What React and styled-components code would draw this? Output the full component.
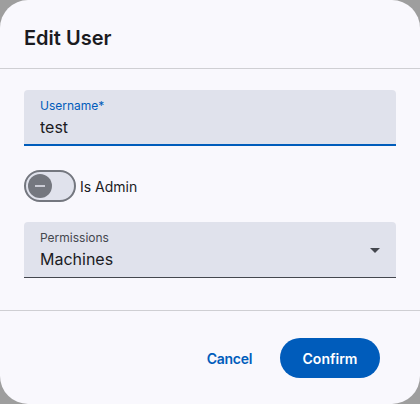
import React, { useState } from "react";
import styled, { createGlobalStyle } from "styled-components";

const GlobalStyle = createGlobalStyle`
  html, body {
    margin: 0;
    padding: 0;
    background: #9e9e9e;
  }
  body {
    font-family: "Inter", "Noto Sans", sans-serif;
  }
`;

const EditUserDialog = () => {
  const [username, setUsername] = useState("test");
  const [isAdmin, setIsAdmin] = useState(false);

  return (
    <Dialog>
      <Header>
        <Title>Edit User</Title>
      </Header>
      <Body>
        <FilledField focused>
          <FieldLabel focused>Username*</FieldLabel>
          <FieldInput
            value={username}
            onChange={(e) => setUsername(e.target.value)}
          />
        </FilledField>

        <SwitchRow>
          <Track on={isAdmin} onClick={() => setIsAdmin(!isAdmin)}>
            <Thumb>
              <svg width="12" height="12" viewBox="0 0 12 12">
                <rect x="1" y="5.2" width="10" height="1.6" fill="#e0e2ec" />
              </svg>
            </Thumb>
          </Track>
          <SwitchLabel>Is Admin</SwitchLabel>
        </SwitchRow>

        <FilledField>
          <FieldLabel>Permissions</FieldLabel>
          <SelectValue>Machines</SelectValue>
          <Arrow>
            <svg width="10" height="5" viewBox="0 0 10 5">
              <path d="M0 0 L10 0 L5 5 Z" fill="#44474e" />
            </svg>
          </Arrow>
        </FilledField>
      </Body>
      <Footer>
        <TextButton>Cancel</TextButton>
        <PrimaryButton>Confirm</PrimaryButton>
      </Footer>
    </Dialog>
  );
};

export default function App() {
  return (
    <>
      <GlobalStyle />
      <EditUserDialog />
    </>
  );
}

const Dialog = styled.div`
  width: 420px;
  height: 404px;
  box-sizing: border-box;
  background: #f9f8fd;
  border-radius: 28px;
  display: flex;
  flex-direction: column;
  overflow: hidden;
`;

const Header = styled.div`
  padding: 24px 24px 16px;
  border-bottom: 1px solid #cfcfd3;
`;

const Title = styled.h2`
  margin: 0;
  font-size: 20px;
  line-height: 28px;
  font-weight: 600;
  color: #1b1b1f;
`;

const Body = styled.div`
  padding: 21px 24px 32px;
  display: flex;
  flex-direction: column;
  border-bottom: 1px solid #cfcfd3;
`;

const FilledField = styled.div`
  position: relative;
  height: 56px;
  box-sizing: border-box;
  background: #e0e2ec;
  border-radius: 4px 4px 0 0;
  border-bottom: ${(p) => (p.focused ? "2px solid #005cbb" : "1px solid #44474e")};
  padding: 8px 16px 0;
  display: flex;
  flex-direction: column;
`;

const FieldLabel = styled.span`
  font-size: 12px;
  line-height: 16px;
  color: ${(p) => (p.focused ? "#005cbb" : "#44474e")};
`;

const FieldInput = styled.input`
  border: none;
  outline: none;
  background: transparent;
  padding: 0;
  margin-top: 1px;
  font-family: inherit;
  font-size: 16px;
  line-height: 24px;
  color: #1b1b1f;
`;

const SelectValue = styled.span`
  margin-top: 1px;
  font-size: 16px;
  line-height: 24px;
  color: #1b1b1f;
`;

const Arrow = styled.span`
  position: absolute;
  right: 16px;
  top: 26px;
  display: flex;
`;

const SwitchRow = styled.div`
  display: flex;
  align-items: center;
  gap: 4px;
  margin: 24px 0 20px;
`;

const Track = styled.button`
  width: 52px;
  height: 32px;
  box-sizing: border-box;
  padding: 0 0 0 2px;
  border: 2px solid #74777f;
  border-radius: 16px;
  background: #e0e2ec;
  display: flex;
  align-items: center;
  cursor: pointer;
`;

const Thumb = styled.span`
  width: 24px;
  height: 24px;
  border-radius: 50%;
  background: #74777f;
  display: flex;
  align-items: center;
  justify-content: center;
`;

const SwitchLabel = styled.span`
  font-size: 14px;
  color: #1b1b1f;
`;

const Footer = styled.div`
  display: flex;
  justify-content: flex-end;
  align-items: center;
  gap: 16px;
  padding: 27px 40px 0 24px;
`;

const TextButton = styled.button`
  height: 40px;
  padding: 0 12px;
  border: none;
  border-radius: 20px;
  background: transparent;
  color: #005cbb;
  font-family: inherit;
  font-size: 14px;
  font-weight: 600;
  letter-spacing: -0.3px;
  cursor: pointer;
`;

const PrimaryButton = styled.button`
  height: 40px;
  width: 100px;
  border: none;
  border-radius: 20px;
  background: #005cbb;
  color: #ffffff;
  font-family: inherit;
  font-size: 14px;
  font-weight: 600;
  cursor: pointer;
`;
